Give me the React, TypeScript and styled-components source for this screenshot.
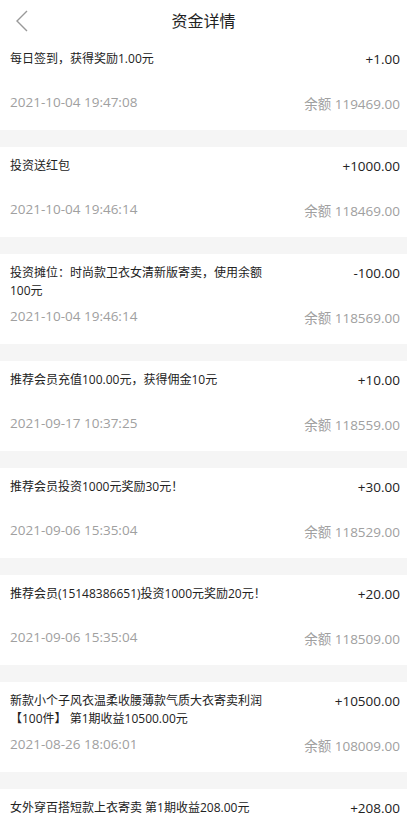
import React from 'react';
import styled, { createGlobalStyle } from 'styled-components';

const GlobalStyle = createGlobalStyle`
  html, body {
    margin: 0;
    padding: 0;
    overflow: hidden;
    background: #f5f5f5;
  }
  body {
    font-family: "Open Sans", "Noto Sans CJK SC", sans-serif;
    -webkit-font-smoothing: antialiased;
  }
`;

interface IRecord {
  title: string;
  amount: string;
  time: string;
  balance: string;
}

const records: IRecord[] = [
  { title: '每日签到，获得奖励1.00元', amount: '+1.00', time: '2021-10-04 19:47:08', balance: '119469.00' },
  { title: '投资送红包', amount: '+1000.00', time: '2021-10-04 19:46:14', balance: '118469.00' },
  { title: '投资摊位：时尚款卫衣女清新版寄卖，使用余额100元', amount: '-100.00', time: '2021-10-04 19:46:14', balance: '118569.00' },
  { title: '推荐会员充值100.00元，获得佣金10元', amount: '+10.00', time: '2021-09-17 10:37:25', balance: '118559.00' },
  { title: '推荐会员投资1000元奖励30元！', amount: '+30.00', time: '2021-09-06 15:35:04', balance: '118529.00' },
  { title: '推荐会员(15148386651)投资1000元奖励20元！', amount: '+20.00', time: '2021-09-06 15:35:04', balance: '118509.00' },
  { title: '新款小个子风衣温柔收腰薄款气质大衣寄卖利润【100件】 第1期收益10500.00元', amount: '+10500.00', time: '2021-08-26 18:06:01', balance: '108009.00' },
  { title: '女外穿百搭短款上衣寄卖 第1期收益208.00元', amount: '+208.00', time: '2021-08-26 18:06:01', balance: '97509.00' },
];

const Page = styled.div`
  width: 100%;
  min-height: 100vh;
  background: #f5f5f5;
`;

const Header = styled.header`
  height: 40px;
  background: #fff;
  display: flex;
  align-items: center;
  justify-content: center;
  position: relative;
`;

const BackButton = styled.button`
  position: absolute;
  left: 8px;
  top: 6px;
  width: 28px;
  height: 30px;
  border: 0;
  padding: 0;
  background: transparent;
  display: flex;
  align-items: center;
  justify-content: center;
`;

const Title = styled.h1`
  margin: 0;
  font-family: "Noto Sans CJK SC", sans-serif;
  font-size: 16px;
  font-weight: 400;
  color: #222;
`;

const List = styled.div`
  display: flex;
  flex-direction: column;
  gap: 17px;
`;

const Card = styled.div`
  background: #fff;
  padding: 10px 7px 19px 10px;
`;

const TopRow = styled.div`
  display: flex;
  justify-content: space-between;
  align-items: flex-start;
  min-height: 43px;
`;

const BottomRow = styled.div`
  display: flex;
  justify-content: space-between;
  align-items: flex-start;
  height: 18px;
`;

const Desc = styled.div`
  max-width: 262px;
  font-size: 12px;
  line-height: 18px;
  color: #222;
`;

const Amount = styled.div`
  font-size: 13.5px;
  line-height: 18px;
  color: #222;
  white-space: nowrap;
`;

const Time = styled.div`
  font-size: 13.5px;
  line-height: 18px;
  color: #a0a0a0;
`;

const Balance = styled.div`
  margin-top: 2px;
  font-size: 13.5px;
  line-height: 18px;
  color: #a0a0a0;
  white-space: nowrap;
`;

const App = () => {
  return (
    <Page>
      <GlobalStyle />
      <Header>
        <BackButton aria-label="back">
          <svg width="14" height="22" viewBox="0 0 14 22" fill="none">
            <path d="M12 1 L2 11 L12 21" stroke="#999" strokeWidth="1.4" />
          </svg>
        </BackButton>
        <Title>资金详情</Title>
      </Header>
      <List>
        {records.map((item, idx) => (
          <Card key={idx}>
            <TopRow>
              <Desc>{item.title}</Desc>
              <Amount>{item.amount}</Amount>
            </TopRow>
            <BottomRow>
              <Time>{item.time}</Time>
              <Balance>余额 {item.balance}</Balance>
            </BottomRow>
          </Card>
        ))}
      </List>
    </Page>
  );
};

export default App;
